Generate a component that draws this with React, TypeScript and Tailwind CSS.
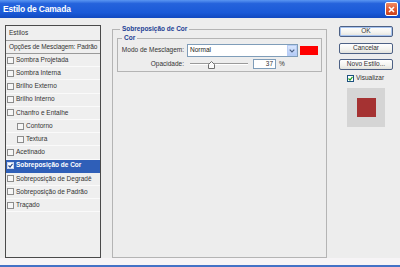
import React from "react";

const items: { label: string; indent?: boolean; selected?: boolean }[] = [
  { label: "Sombra Projetada" },
  { label: "Sombra Interna" },
  { label: "Brilho Externo" },
  { label: "Brilho Interno" },
  { label: "Chanfro e Entalhe" },
  { label: "Contorno", indent: true },
  { label: "Textura", indent: true },
  { label: "Acetinado" },
  { label: "Sobreposição de Cor", selected: true },
  { label: "Sobreposição de Degradê" },
  { label: "Sobreposição de Padrão" },
  { label: "Traçado" },
];

function Btn({ label, primary }: { label: string; primary?: boolean }) {
  return (
    <div
      className={
        "h-[11px] w-[54px] rounded-[2px] border border-[#4d6185] flex items-center justify-center text-[6.5px] leading-none text-[#333] whitespace-nowrap bg-[linear-gradient(180deg,#ffffff_0%,#f3f3ef_60%,#e2e2dc_100%)] " +
        (primary ? "shadow-[inset_0_0_0_1px_#a8c4f0]" : "")
      }
    >
      {label}
    </div>
  );
}

export default function App() {
  return (
    <div className="w-[400px] h-[267px] overflow-hidden bg-[#ededed] flex flex-col font-['Liberation_Sans',Arial,sans-serif] text-[#333]">
      {/* title bar */}
      <div className="h-[18px] shrink-0 flex items-center justify-between pl-[3px] pr-[2px] bg-[linear-gradient(180deg,#5a96f2_0%,#2563dc_20%,#1a5ad8_70%,#1149c0_100%)]">
        <span className="text-white font-bold text-[8.5px] leading-none tracking-[-0.2px]">
          Estilo de Camada
        </span>
        <div className="w-[13px] h-[14px] rounded-[2px] border border-white bg-[linear-gradient(180deg,#f08a64_0%,#e25a33_50%,#c9421e_100%)] flex items-center justify-center">
          <svg width="7" height="7" viewBox="0 0 7 7">
            <path d="M1 1L6 6M6 1L1 6" stroke="white" strokeWidth="1.6" />
          </svg>
        </div>
      </div>

      {/* main */}
      <div className="h-[240px] shrink-0 flex pt-[7px] pl-[5px]">
        {/* left list */}
        <div className="w-[96px] h-[233px] border border-[#4a4a4a] bg-[#efefef] flex flex-col text-[6.5px] leading-none whitespace-nowrap overflow-hidden">
          <div className="h-[15px] shrink-0 flex items-center pl-[3px] border-b border-[#9a9a9a]">Estilos</div>
          <div className="h-[13px] shrink-0 flex items-center pl-[3px] border-b border-[#9a9a9a] tracking-[-0.1px]">
            Opções de Mesclagem: Padrão
          </div>
          {items.map((it) => (
            <div
              key={it.label}
              className={
                "h-[13.2px] shrink-0 flex items-center gap-[2px] border-b " +
                (it.selected
                  ? "bg-[#2f5fb8] text-white font-bold border-[#2f5fb8]"
                  : "border-[#fafafa]") +
                (it.indent ? " pl-[11px]" : " pl-[1px]")
              }
            >
              {it.selected ? (
                <div className="w-[7px] h-[7px] bg-white border border-[#c9d6ee] flex items-center justify-center">
                  <svg width="5" height="5" viewBox="0 0 5 5">
                    <path d="M0.5 2.5L2 4L4.5 0.8" stroke="#2a4a8a" strokeWidth="1.2" fill="none" />
                  </svg>
                </div>
              ) : (
                <div className="w-[7px] h-[7px] border border-[#8c8c8c] bg-[#f6f6f6]" />
              )}
              <span>{it.label}</span>
            </div>
          ))}
        </div>

        {/* middle group */}
        <fieldset className="ml-[11px] w-[215px] h-[233px] border border-[#b4b4b4] pl-[4px] pr-[4px] pt-[1px]">
          <legend className="ml-[3px] px-[2px] text-[6.5px] leading-[8px] font-bold text-[#1d3f94] whitespace-nowrap">
            Sobreposição de Cor
          </legend>
          <fieldset className="w-[205px] h-[38px] border border-[#b4b4b4] pl-[1px] pt-[2px]">
            <legend className="ml-[3px] px-[2px] text-[6.5px] leading-[8px] font-bold text-[#1d3f94]">Cor</legend>
            <div className="flex items-center h-[13px]">
              <span className="w-[65px] text-right text-[6.5px] leading-none whitespace-nowrap">Modo de Mesclagem:</span>
              <div className="ml-[3px] w-[111px] h-[13px] bg-white border border-[#7f9db9] flex items-center justify-between">
                <span className="pl-[2px] text-[6.5px] leading-none text-[#222]">Normal</span>
                <div className="w-[10px] h-[11px] bg-[linear-gradient(180deg,#d9e6fd_0%,#b4cbf7_100%)] border border-[#b8cdf5] flex items-center justify-center">
                  <svg width="6" height="4" viewBox="0 0 6 4">
                    <path d="M0.7 0.7L3 3L5.3 0.7" stroke="#4d6185" strokeWidth="1.2" fill="none" />
                  </svg>
                </div>
              </div>
              <div className="ml-[2px] w-[18px] h-[9px] bg-[#ff0000]" />
            </div>
            <div className="flex items-center h-[10px] mt-[2px]">
              <span className="w-[65px] text-right text-[6.5px] leading-none">Opacidade:</span>
              <div className="ml-[6px] w-[58px] h-[10px] relative">
                <div className="absolute left-0 right-0 top-[4px] h-[2px] border-t border-[#9a9a9a] border-b border-b-white" />
                <svg className="absolute left-[18px] top-[2px]" width="7" height="8" viewBox="0 0 7 8">
                  <path d="M3.5 0.5L6.5 3.5V7.5H0.5V3.5Z" fill="#fafafa" stroke="#707070" strokeWidth="1" />
                </svg>
              </div>
              <div className="ml-[5px] w-[23px] h-[10px] bg-white border border-[#7f9db9] flex items-center justify-end pr-[2px] text-[6.5px] leading-none">
                37
              </div>
              <span className="ml-[3px] text-[6.5px] leading-none">%</span>
            </div>
          </fieldset>
        </fieldset>

        {/* right column */}
        <div className="ml-[12px] w-[54px] flex flex-col">
          <div className="mt-[1px]">
            <Btn label="OK" primary />
          </div>
          <div className="mt-[6px]">
            <Btn label="Cancelar" />
          </div>
          <div className="mt-[5px]">
            <Btn label="Novo Estilo..." />
          </div>
          <div className="mt-[5px] ml-[8px] flex items-center gap-[2px]">
            <div className="w-[7px] h-[7px] border border-[#1c5180] bg-white flex items-center justify-center">
              <svg width="5" height="5" viewBox="0 0 5 5">
                <path d="M0.5 2.5L2 4L4.5 0.8" stroke="#21a121" strokeWidth="1.2" fill="none" />
              </svg>
            </div>
            <span className="text-[6.5px] leading-none">Visualizar</span>
          </div>
          <div className="mt-[6px] ml-[8px] w-[38px] h-[39px] bg-[#d5d5d5] flex items-center justify-center">
            <div className="w-[19px] h-[19px] bg-[#a53232]" />
          </div>
        </div>
      </div>

      <div className="h-[7px] shrink-0 bg-[#f6f4f6]" />
      <div className="h-[2px] shrink-0 bg-[#4372c6]" />
    </div>
  );
}
